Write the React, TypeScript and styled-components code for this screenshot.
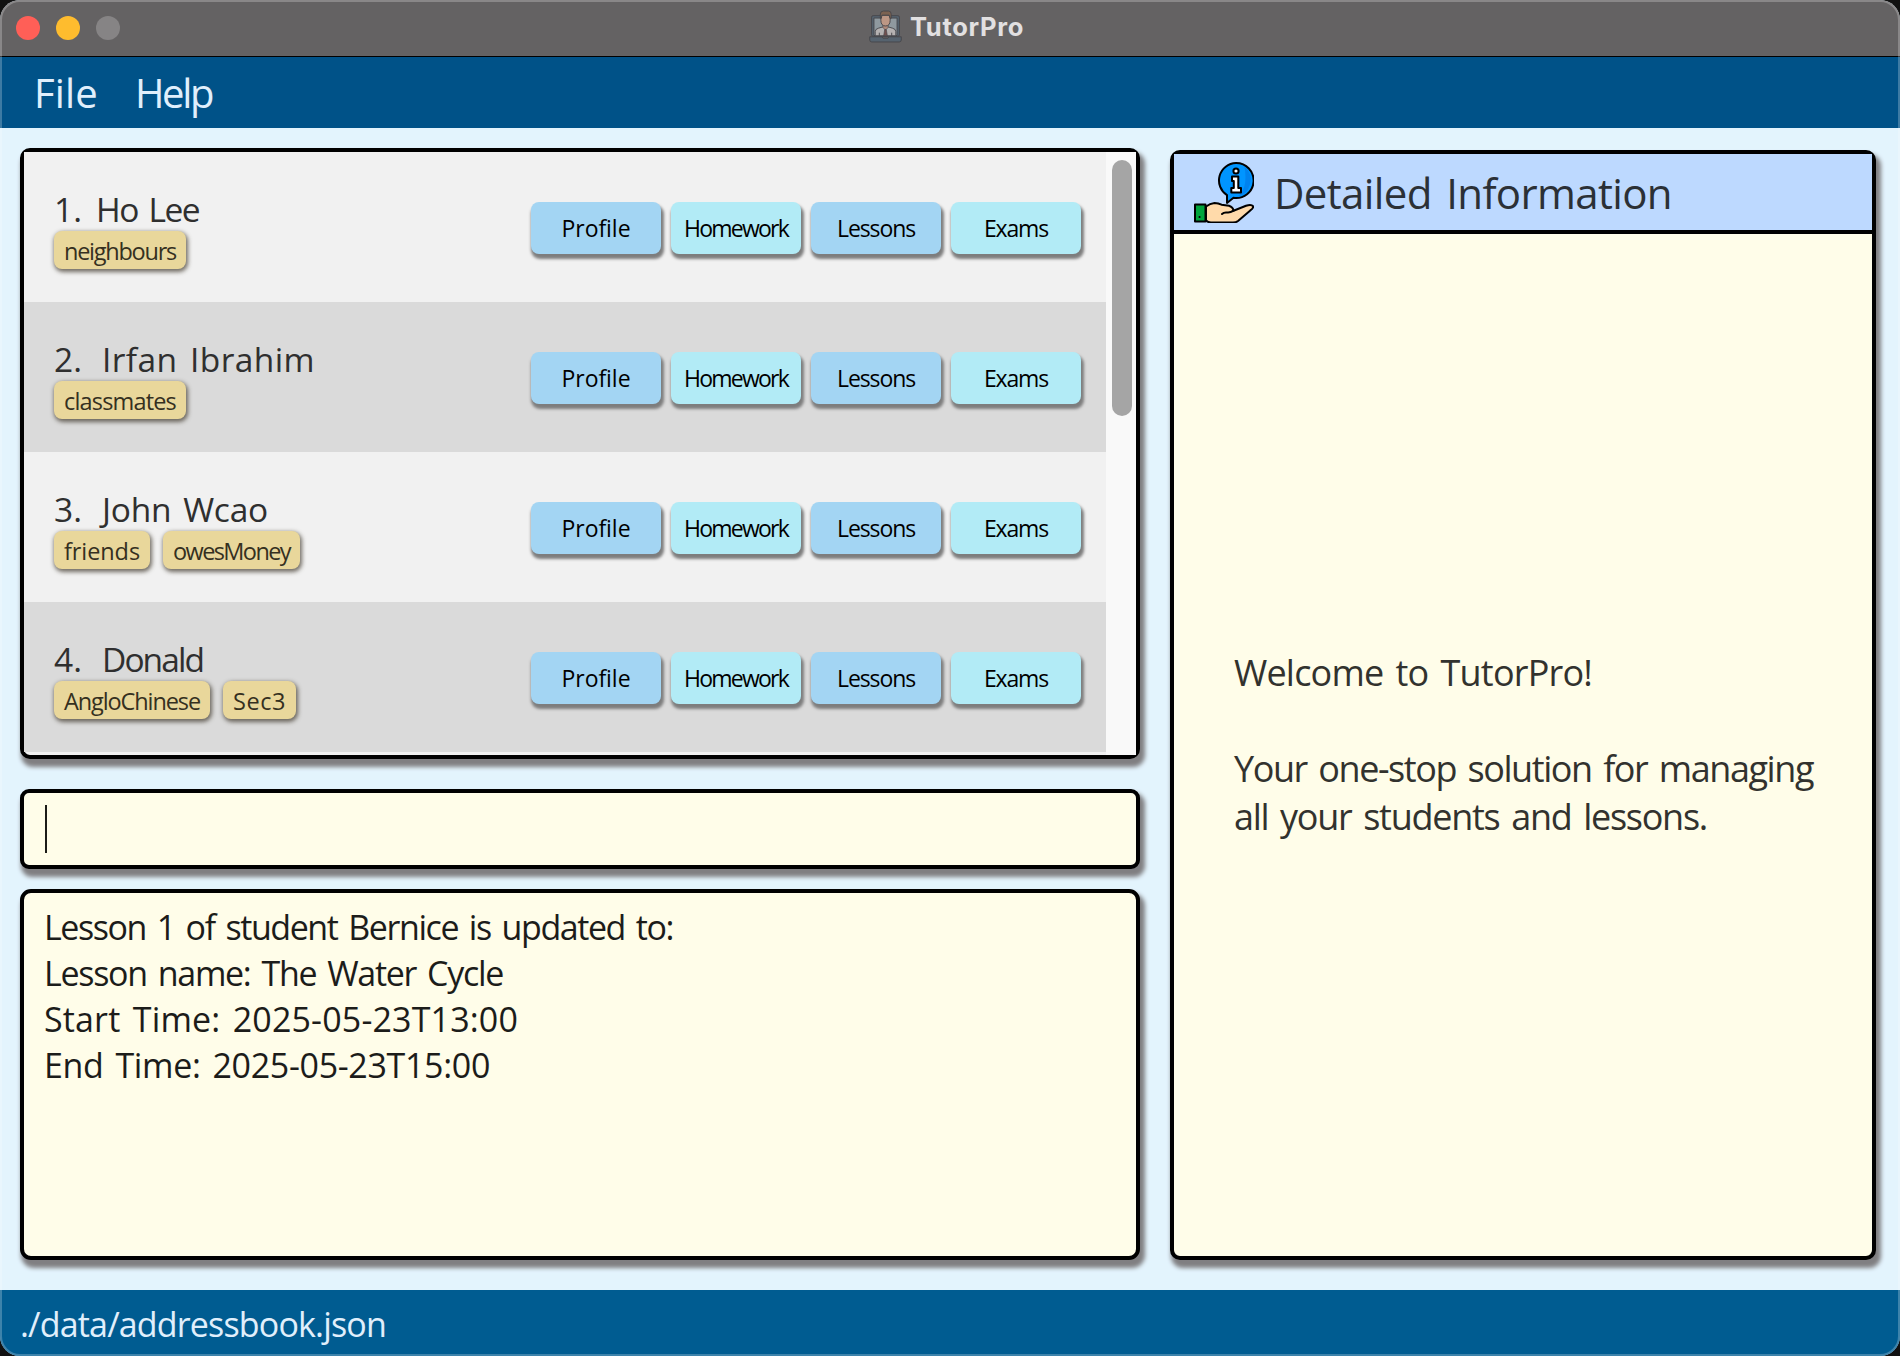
import React, { useLayoutEffect, useRef, useState } from "react";
import styled, { createGlobalStyle, css } from "styled-components";

const Global = createGlobalStyle`
  * { box-sizing: border-box; }
  body { margin: 0; background: #111; font-family: "Comic Sans MS", "Open Sans", sans-serif; }
`;

const panelShadow = css`box-shadow: 3px 6px 4px 2px #807f82;`;

const Window = styled.div`
  position: relative;
  width: 1900px;
  height: 1356px;
  display: flex;
  flex-direction: column;
  border-radius: 20px;
  overflow: hidden;
  background: #e3f4fd;
  &::after {
    content: "";
    position: absolute;
    inset: 0;
    border: 2px solid rgba(255, 255, 255, 0.24);
    border-radius: 20px;
    pointer-events: none;
  }
`;

const TitleBar = styled.header`
  height: 57px;
  flex: none;
  display: grid;
  grid-template-columns: 1fr auto 1fr;
  align-items: center;
  padding: 0 16px;
  background: #646263;
  border-bottom: 1px solid #000;
`;

const Lights = styled.div`
  display: flex;
  gap: 16px;
`;

const Light = styled.span<{ $color: string }>`
  width: 24px;
  height: 24px;
  border-radius: 50%;
  background: ${(p) => p.$color};
`;

const AppTitle = styled.div`
  display: flex;
  align-items: center;
  gap: 8px;
  padding-right: 7px;
  padding-bottom: 3px;
  font: 700 25.5px/32px Inter, sans-serif;
  color: #e2e0e1;
`;

const MenuBar = styled.nav`
  height: 71px;
  flex: none;
  display: flex;
  align-items: center;
  gap: 37px;
  padding-left: 34px;
  background: #005288;
  color: #e0effc;
  font-size: 40px;
`;

const Body = styled.main`
  flex: 1;
  display: flex;
  gap: 30px;
  padding: 20px 24px 30px 20px;
`;

const LeftColumn = styled.div`
  width: 1120px;
  display: flex;
  flex-direction: column;
`;

const ListPanel = styled.section`
  height: 611px;
  display: flex;
  border: 4px solid #000;
  border-radius: 10px;
  background: #f1f1f1;
  ${panelShadow}
`;

const Rows = styled.div`
  flex: 1;
`;

const Row = styled.div<{ $dark: boolean }>`
  height: 150px;
  display: flex;
  justify-content: space-between;
  padding: 0 25px 0 30px;
  background: ${(p) => (p.$dark ? "#dadada" : "#f1f1f1")};
`;

const Person = styled.div`
  padding-top: 34px;
`;

const NameLine = styled.div`
  display: flex;
  height: 45px;
  font-size: 33.5px;
  line-height: 46px;
  color: #2f2f2f;
`;

const Index = styled.span<{ $wide: boolean }>`
  width: ${(p) => (p.$wide ? 48 : 42)}px;
`;

const Tags = styled.div`
  display: flex;
  gap: 13px;
`;

const Tag = styled.span`
  height: 38px;
  padding: 0 10px;
  border-radius: 8px;
  background: #e9d79b;
  color: #35301f;
  font-size: 23.5px;
  line-height: 40px;
  box-shadow: 1px 2px 4px 1px rgba(60, 52, 40, 0.7);
`;

const Actions = styled.div`
  display: flex;
  gap: 10px;
  padding-top: 50px;
`;

const Action = styled.button<{ $light: boolean }>`
  width: 130px;
  height: 52px;
  display: flex;
  align-items: center;
  justify-content: center;
  padding: 0;
  border: 0;
  border-radius: 8px;
  background: ${(p) => (p.$light ? "#b2ebf6" : "#a3d5f3")};
  color: #000;
  font-family: inherit;
  font-size: 23px;
  box-shadow: 1.5px 4px 3px 1px #7d7d7d;
`;

const ScrollTrack = styled.div`
  width: 30px;
  padding: 8px 4px 0 6px;
  background: #f9f9f9;
`;

const ScrollThumb = styled.div`
  height: 256px;
  border-radius: 10px;
  background: #a5a5a5;
`;

const CommandBox = styled.div`
  height: 80px;
  margin: 30px 0 20px;
  padding: 12px 21px;
  border: 4px solid #000;
  border-radius: 9px;
  background: #fffde9;
  ${panelShadow}
`;

const Caret = styled.div`
  width: 2px;
  height: 48px;
  background: #1c1c18;
`;

const ResultBox = styled.div`
  flex: 1;
  padding: 11px 20px;
  border: 4px solid #000;
  border-radius: 11px;
  background: #fffde9;
  color: #1c1c1a;
  font-size: 34px;
  line-height: 46px;
  ${panelShadow}
`;

const DetailPanel = styled.section`
  flex: 1;
  margin-top: 2px;
  display: flex;
  flex-direction: column;
  border: 4px solid #000;
  border-radius: 10px;
  background: #fffde9;
  ${panelShadow}
`;

const DetailHeader = styled.div`
  height: 80px;
  flex: none;
  display: flex;
  align-items: center;
  gap: 20px;
  padding-left: 20px;
  border-bottom: 4px solid #000;
  background: #bdd9ff;
  color: #2b3036;
  font-size: 42px;
`;

const Welcome = styled.div`
  flex: 1;
  padding: 415px 0 0 60px;
  font-size: 36px;
  line-height: 48px;
  color: #32322e;
`;

const TextLine = styled.div`
  min-height: 1lh;
  white-space: pre;
`;

const StatusBar = styled.footer`
  height: 66px;
  flex: none;
  display: flex;
  align-items: center;
  padding-top: 2px;
  padding-left: 20px;
  background: #005c91;
  color: #e0effc;
  font-size: 34px;
`;

const FitText = styled.span`
  display: inline-block;
  white-space: pre;
  word-spacing: 0.1em;
`;

/** Tracks a label out or in so that it takes up the given width. */
function Fit({ w, children }: { w: number; children: string }) {
  const ref = useRef<HTMLSpanElement>(null);
  const [spacing, setSpacing] = useState(0);
  useLayoutEffect(() => {
    if (ref.current) {
      const natural = ref.current.getBoundingClientRect().width;
      setSpacing((w - natural) / children.length);
    }
  }, [w, children]);
  return (
    <FitText ref={ref} style={{ letterSpacing: spacing }}>
      {children}
    </FitText>
  );
}

const TutorIcon = () => (
  <svg width="33" height="33" viewBox="0 0 32 32" fill="none" stroke="#46464b" strokeWidth="0.9" strokeLinejoin="round">
    <rect x="2.500" y="5.500" width="27" height="20" rx="1.500" fill="#56636f" />
    <rect x="4.800" y="7.800" width="22.400" height="17" fill="#8f999f" />
    <path d="M6 25v-4q0-2.500 3-3.300l4-1.200h6l4 1.200q3 .8 3 3.300v4z" fill="#b5b2b2" />
    <path d="M13.500 13v4l2.500 2.500 2.500-2.500v-4z" fill="#b0897a" strokeWidth=".6" />
    <path d="M11.500 5v5q0 5.500 4.500 5.500t4.500-5.500V5z" fill="#bd9785" />
    <path d="M11 8V4q0-3 3-3h5q2.500 0 2.500 3v4h-1.200L19.500 5h-7L12 8z" fill="#7c6251" />
    <path d="M15.200 19h1.600l1 6h-3.600z" fill="#71504f" strokeWidth=".6" />
    <path d="M10 22v3M22 22v3" />
    <path d="M.7 26h11.800l1 1.300h5L19.500 26h11.800v3q0 2-2 2H2.700q-2 0-2-2z" fill="#56636f" />
  </svg>
);

const InfoIcon = () => (
  <svg width="60" height="62" viewBox="0 0 60 62" stroke="#000" strokeWidth="2" strokeLinejoin="round" strokeLinecap="round">
    <path d="M42 2a17.500 17.500 0 1 1-2.500 34.800L33 42V34.200A17.500 17.500 0 0 1 42 2z" fill="#0095ff" />
    <path d="M50.500 5.500a17.500 17.500 0 0 1-8 30.500q12-7 8-30.500z" fill="#0082ee" stroke="none" />
    <circle cx="42" cy="10" r="2.600" fill="#fff" />
    <path d="M38 15.500h6.300v11.500h2.700v4.500h-9.700V27h2.500v-7H38z" fill="#fff" />
    <path d="M12 45.500q4-3 8.500-3.500 4 0 7 1.700l7.500 1q4 1.300 4.500 5l12.500-5q5.500-1.500 7 .5.800 2-3 4.500L44 60q-2 1.500-5 1.500H17q-3 0-5-2z" fill="#ffdaaa" />
    <path d="M39.500 49.700q-3.500 2.300-6.500 1.800-3-.4-5 1.500" fill="none" />
    <rect x="1" y="43.500" width="10.500" height="17" fill="#00a53c" />
    <path d="M5.500 56h.1" />
  </svg>
);

type Label = [text: string, width: number];

const students: { name: Label; tags: Label[] }[] = [
  { name: ["Ho Lee", 103], tags: [["neighbours", 112]] },
  { name: ["Irfan Ibrahim", 213], tags: [["classmates", 112]] },
  { name: ["John Wcao", 166], tags: [["friends", 76], ["owesMoney", 117]] },
  { name: ["Donald", 101], tags: [["AngloChinese", 136], ["Sec3", 53]] },
];

const actions: Label[] = [["Profile", 69], ["Homework", 104], ["Lessons", 78], ["Exams", 64]];

const resultLines: Label[] = [
  ["Lesson 1 of student Bernice is updated to:", 629],
  ["Lesson name: The Water Cycle", 459],
  ["Start Time: 2025-05-23T13:00", 474],
  ["End Time: 2025-05-23T15:00", 446],
];

const welcomeLines: Label[] = [
  ["Welcome to TutorPro!", 358],
  ["", 0],
  ["Your one-stop solution for managing", 579],
  ["all your students and lessons.", 473],
];

const Lines = ({ lines }: { lines: Label[] }) => (
  <>
    {lines.map(([text, w], i) => (
      <TextLine key={i}>{text && <Fit w={w}>{text}</Fit>}</TextLine>
    ))}
  </>
);

export default function App() {
  return (
    <>
      <Global />
      <Window>
        <TitleBar>
          <Lights>
            <Light $color="#ff5f57" />
            <Light $color="#febc2e" />
            <Light $color="#868485" />
          </Lights>
          <AppTitle>
            <TutorIcon />
            <Fit w={114}>TutorPro</Fit>
          </AppTitle>
        </TitleBar>
        <MenuBar>
          <Fit w={64}>File</Fit>
          <Fit w={77}>Help</Fit>
        </MenuBar>
        <Body>
          <LeftColumn>
            <ListPanel>
              <Rows>
                {students.map((s, i) => (
                  <Row key={s.name[0]} $dark={i % 2 === 1}>
                    <Person>
                      <NameLine>
                        <Index $wide={i > 0}>{i + 1}.</Index>
                        <Fit w={s.name[1]}>{s.name[0]}</Fit>
                      </NameLine>
                      <Tags>
                        {s.tags.map(([text, w]) => (
                          <Tag key={text}>
                            <Fit w={w}>{text}</Fit>
                          </Tag>
                        ))}
                      </Tags>
                    </Person>
                    <Actions>
                      {actions.map(([text, w], j) => (
                        <Action key={text} $light={j % 2 === 1}>
                          <Fit w={w}>{text}</Fit>
                        </Action>
                      ))}
                    </Actions>
                  </Row>
                ))}
              </Rows>
              <ScrollTrack>
                <ScrollThumb />
              </ScrollTrack>
            </ListPanel>
            <CommandBox>
              <Caret />
            </CommandBox>
            <ResultBox>
              <Lines lines={resultLines} />
            </ResultBox>
          </LeftColumn>
          <DetailPanel>
            <DetailHeader>
              <InfoIcon />
              <Fit w={398}>Detailed Information</Fit>
            </DetailHeader>
            <Welcome>
              <Lines lines={welcomeLines} />
            </Welcome>
          </DetailPanel>
        </Body>
        <StatusBar>
          <Fit w={366}>./data/addressbook.json</Fit>
        </StatusBar>
      </Window>
    </>
  );
}
